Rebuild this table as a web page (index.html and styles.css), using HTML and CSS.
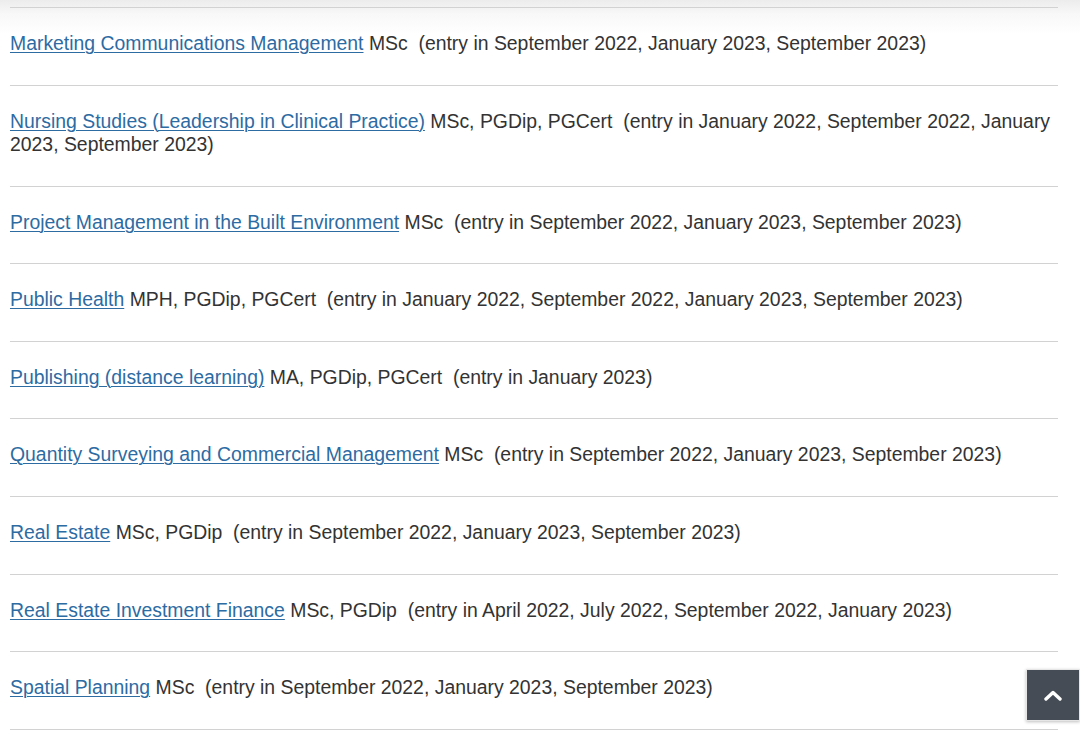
FILE: index.html
```html
<!DOCTYPE html>
<html lang="en">
<head>
<meta charset="utf-8">
<title>Courses</title>
<link rel="stylesheet" href="styles.css">
</head>
<body>
<ul class="course-list">
  <li class="course"><a href="#">Marketing Communications Management</a> MSc&nbsp; (entry in September 2022, January 2023, September 2023)</li>
  <li class="course"><a href="#">Nursing Studies (Leadership in Clinical Practice)</a> MSc, PGDip, PGCert&nbsp; (entry in January 2022, September 2022, January 2023, September 2023)</li>
  <li class="course"><a href="#">Project Management in the Built Environment</a> MSc&nbsp; (entry in September 2022, January 2023, September 2023)</li>
  <li class="course"><a href="#">Public Health</a> MPH, PGDip, PGCert&nbsp; (entry in January 2022, September 2022, January 2023, September 2023)</li>
  <li class="course"><a href="#">Publishing (distance learning)</a> MA, PGDip, PGCert&nbsp; (entry in January 2023)</li>
  <li class="course"><a href="#">Quantity Surveying and Commercial Management</a> MSc&nbsp; (entry in September 2022, January 2023, September 2023)</li>
  <li class="course"><a href="#">Real Estate</a> MSc, PGDip&nbsp; (entry in September 2022, January 2023, September 2023)</li>
  <li class="course"><a href="#">Real Estate Investment Finance</a> MSc, PGDip&nbsp; (entry in April 2022, July 2022, September 2022, January 2023)</li>
  <li class="course"><a href="#">Spatial Planning</a> MSc&nbsp; (entry in September 2022, January 2023, September 2023)</li>
</ul>
<a class="back-to-top" href="#" aria-label="Back to top">
  <svg width="20" height="12" viewBox="0 0 20 12"><path d="M3 10 L10 3.5 L17 10" fill="none" stroke="#fff" stroke-width="3.4" stroke-linecap="round" stroke-linejoin="round"/></svg>
</a>
</body>
</html>
```
FILE: styles.css
```css
html, body {
  margin: 0;
  padding: 0;
}
body {
  background: linear-gradient(#ececec 0, #f8f8f8 14px, #ffffff 34px) no-repeat;
  background-color: #fff;
  font-family: "Liberation Sans", Arial, Helvetica, sans-serif;
  font-size: 19.4px;
  line-height: 23.4px;
  color: #333;
  height: 735px;
  overflow: hidden;
}
.course-list {
  list-style: none;
  margin: 0 0 0 10px;
  padding: 7px 0 0 0;
  width: 1048px;
}
.course {
  border-top: 1px solid #d2d2d2;
  padding: 24px 0 29.2px 0;
}
.course:last-child {
  border-bottom: 1px solid #d2d2d2;
}
.course a {
  color: #2d6ba3;
  text-decoration: underline;
  text-underline-offset: 2px;
  text-decoration-thickness: 1px;
}
.back-to-top {
  position: fixed;
  right: 0;
  bottom: 14px;
  width: 52px;
  height: 50px;
  background: #464c55;
  border: 1px solid #e6e6e6;
  box-shadow: 0 1px 3px rgba(0,0,0,0.25);
  display: flex;
  align-items: center;
  justify-content: center;
}
```
